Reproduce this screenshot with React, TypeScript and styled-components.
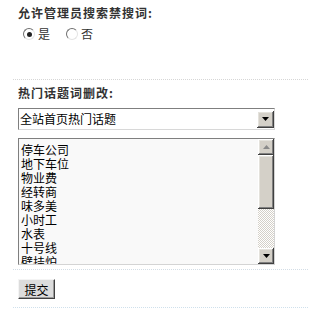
import React from 'react';
import styled, { createGlobalStyle } from 'styled-components';

const topics = ['停车公司', '地下车位', '物业费', '经转商', '味多美', '小时工', '水表', '十号线', '壁挂炉'];

export default function App() {
    return (
        <>
            <GlobalStyle />
            <Page>
                <Section $pb={39}>
                    <Title>允许管理员搜索禁搜词:</Title>
                    <RadioRow>
                        <RadioLabel>
                            <Radio $checked />
                            是
                        </RadioLabel>
                        <RadioLabel>
                            <Radio />
                            否
                        </RadioLabel>
                    </RadioRow>
                </Section>

                <Section $pb={4} $line="#d3dde6">
                    <Title>热门话题词删改:</Title>
                    <SelectBox>
                        <SelectText>全站首页热门话题</SelectText>
                        <ArrowButton $size={17}>
                            <Arrow dir="down" />
                        </ArrowButton>
                    </SelectBox>
                    <TextBox>
                        <Lines>
                            {topics.map((t) => (
                                <Line key={t}>{t}</Line>
                            ))}
                        </Lines>
                        <ScrollBar>
                            <ArrowButton $size={16}>
                                <Arrow dir="up" muted />
                            </ArrowButton>
                            <Thumb />
                            <Track />
                            <ArrowButton $size={16}>
                                <Arrow dir="down" />
                            </ArrowButton>
                        </ScrollBar>
                    </TextBox>
                </Section>

                <Section $pt={9} $pb={8} $line="#cfe0ec">
                    <SubmitButton type="button">提交</SubmitButton>
                </Section>
            </Page>
        </>
    );
}

function Arrow({ dir, muted }: { dir: 'up' | 'down'; muted?: boolean }) {
    const points = dir === 'down' ? '0,0 7,0 3.5,4' : '3.5,0 7,4 0,4';
    return (
        <svg width="7" height="4" viewBox="0 0 7 4">
            <polygon points={points} fill={muted ? '#8a8a8a' : '#000'} />
        </svg>
    );
}

const GlobalStyle = createGlobalStyle`
    body {
        margin: 0;
        background: #fff;
        font-family: "Noto Sans CJK SC", "Liberation Sans", sans-serif;
        font-size: 12px;
    }
`;

const Page = styled.div`
    width: 308px;
`;

const Section = styled.div<{ $pt?: number; $pb: number; $line?: string }>`
    margin-left: 13px;
    padding: ${(p) => p.$pt ?? 6}px 0 ${(p) => p.$pb}px 5px;
    border-bottom: 1px dotted ${(p) => p.$line ?? '#d6d6d6'};
    display: flex;
    flex-direction: column;
    align-items: flex-start;
`;

const Title = styled.div`
    font-weight: 700;
    color: #333;
    line-height: 14px;
    letter-spacing: 1px;
`;

const RadioRow = styled.div`
    display: flex;
    gap: 16px;
    margin-top: 8px;
    padding-left: 5px;
    line-height: 12px;
`;

const RadioLabel = styled.label`
    display: flex;
    align-items: center;
    gap: 3px;
    color: #333;
`;

const Radio = styled.span<{ $checked?: boolean }>`
    width: 10px;
    height: 10px;
    border-radius: 50%;
    border: 1px solid;
    border-color: #6f6f6f #e4e4e4 #e4e4e4 #6f6f6f;
    background: #fff;
    display: flex;
    align-items: center;
    justify-content: center;

    &::after {
        content: '';
        width: 5px;
        height: 5px;
        border-radius: 50%;
        background: ${(p) => (p.$checked ? '#222' : 'transparent')};
    }
`;

const SelectBox = styled.div`
    margin-top: 8px;
    width: 257px;
    height: 22px;
    box-sizing: border-box;
    border: 1px solid;
    border-color: #7f7f7f #d8d8d8 #d8d8d8 #7f7f7f;
    display: flex;
    align-items: center;
    justify-content: space-between;
    background: #fff;
`;

const SelectText = styled.span`
    padding-left: 1px;
    color: #000;
    line-height: 20px;
`;

const ArrowButton = styled.div<{ $size: number }>`
    width: ${(p) => p.$size}px;
    height: ${(p) => p.$size}px;
    flex-shrink: 0;
    background: #d4d0c8;
    box-shadow: inset -1px -1px #404040, inset 1px 1px #ffffff, inset -2px -2px #808080, inset 2px 2px #e4e2dc;
    display: flex;
    align-items: center;
    justify-content: center;
`;

const TextBox = styled.div`
    margin-top: 8px;
    width: 257px;
    height: 127px;
    box-sizing: border-box;
    border: 1px solid;
    border-color: #7f7f7f #d4d4d4 #d4d4d4 #7f7f7f;
    background: #f9f9f9;
    display: flex;
    overflow: hidden;
`;

const Lines = styled.div`
    flex: 1;
    padding: 4px 0 0 2px;
    overflow: hidden;
`;

const Line = styled.div`
    color: #000;
    line-height: 14px;
    white-space: nowrap;
`;

const ScrollBar = styled.div`
    width: 16px;
    display: flex;
    flex-direction: column;
`;

const Thumb = styled.div`
    height: 54px;
    background: #d4d0c8;
    box-shadow: inset -1px -1px #404040, inset 1px 1px #ffffff, inset -2px -2px #808080, inset 2px 2px #e4e2dc;
`;

const Track = styled.div`
    flex: 1;
    background: repeating-conic-gradient(#d4d0c8 0 25%, #ffffff 0 50%) 0 0 / 2px 2px;
`;

const SubmitButton = styled.button`
    width: 37px;
    height: 20px;
    padding: 0;
    margin: 0;
    font-family: inherit;
    font-size: 12px;
    color: #000;
    background: #dcdcdc;
    border: 1px solid;
    border-color: #f4f4f4 #404040 #404040 #f4f4f4;
    box-shadow: inset -1px -1px #9a9a9a;
    cursor: pointer;
`;
